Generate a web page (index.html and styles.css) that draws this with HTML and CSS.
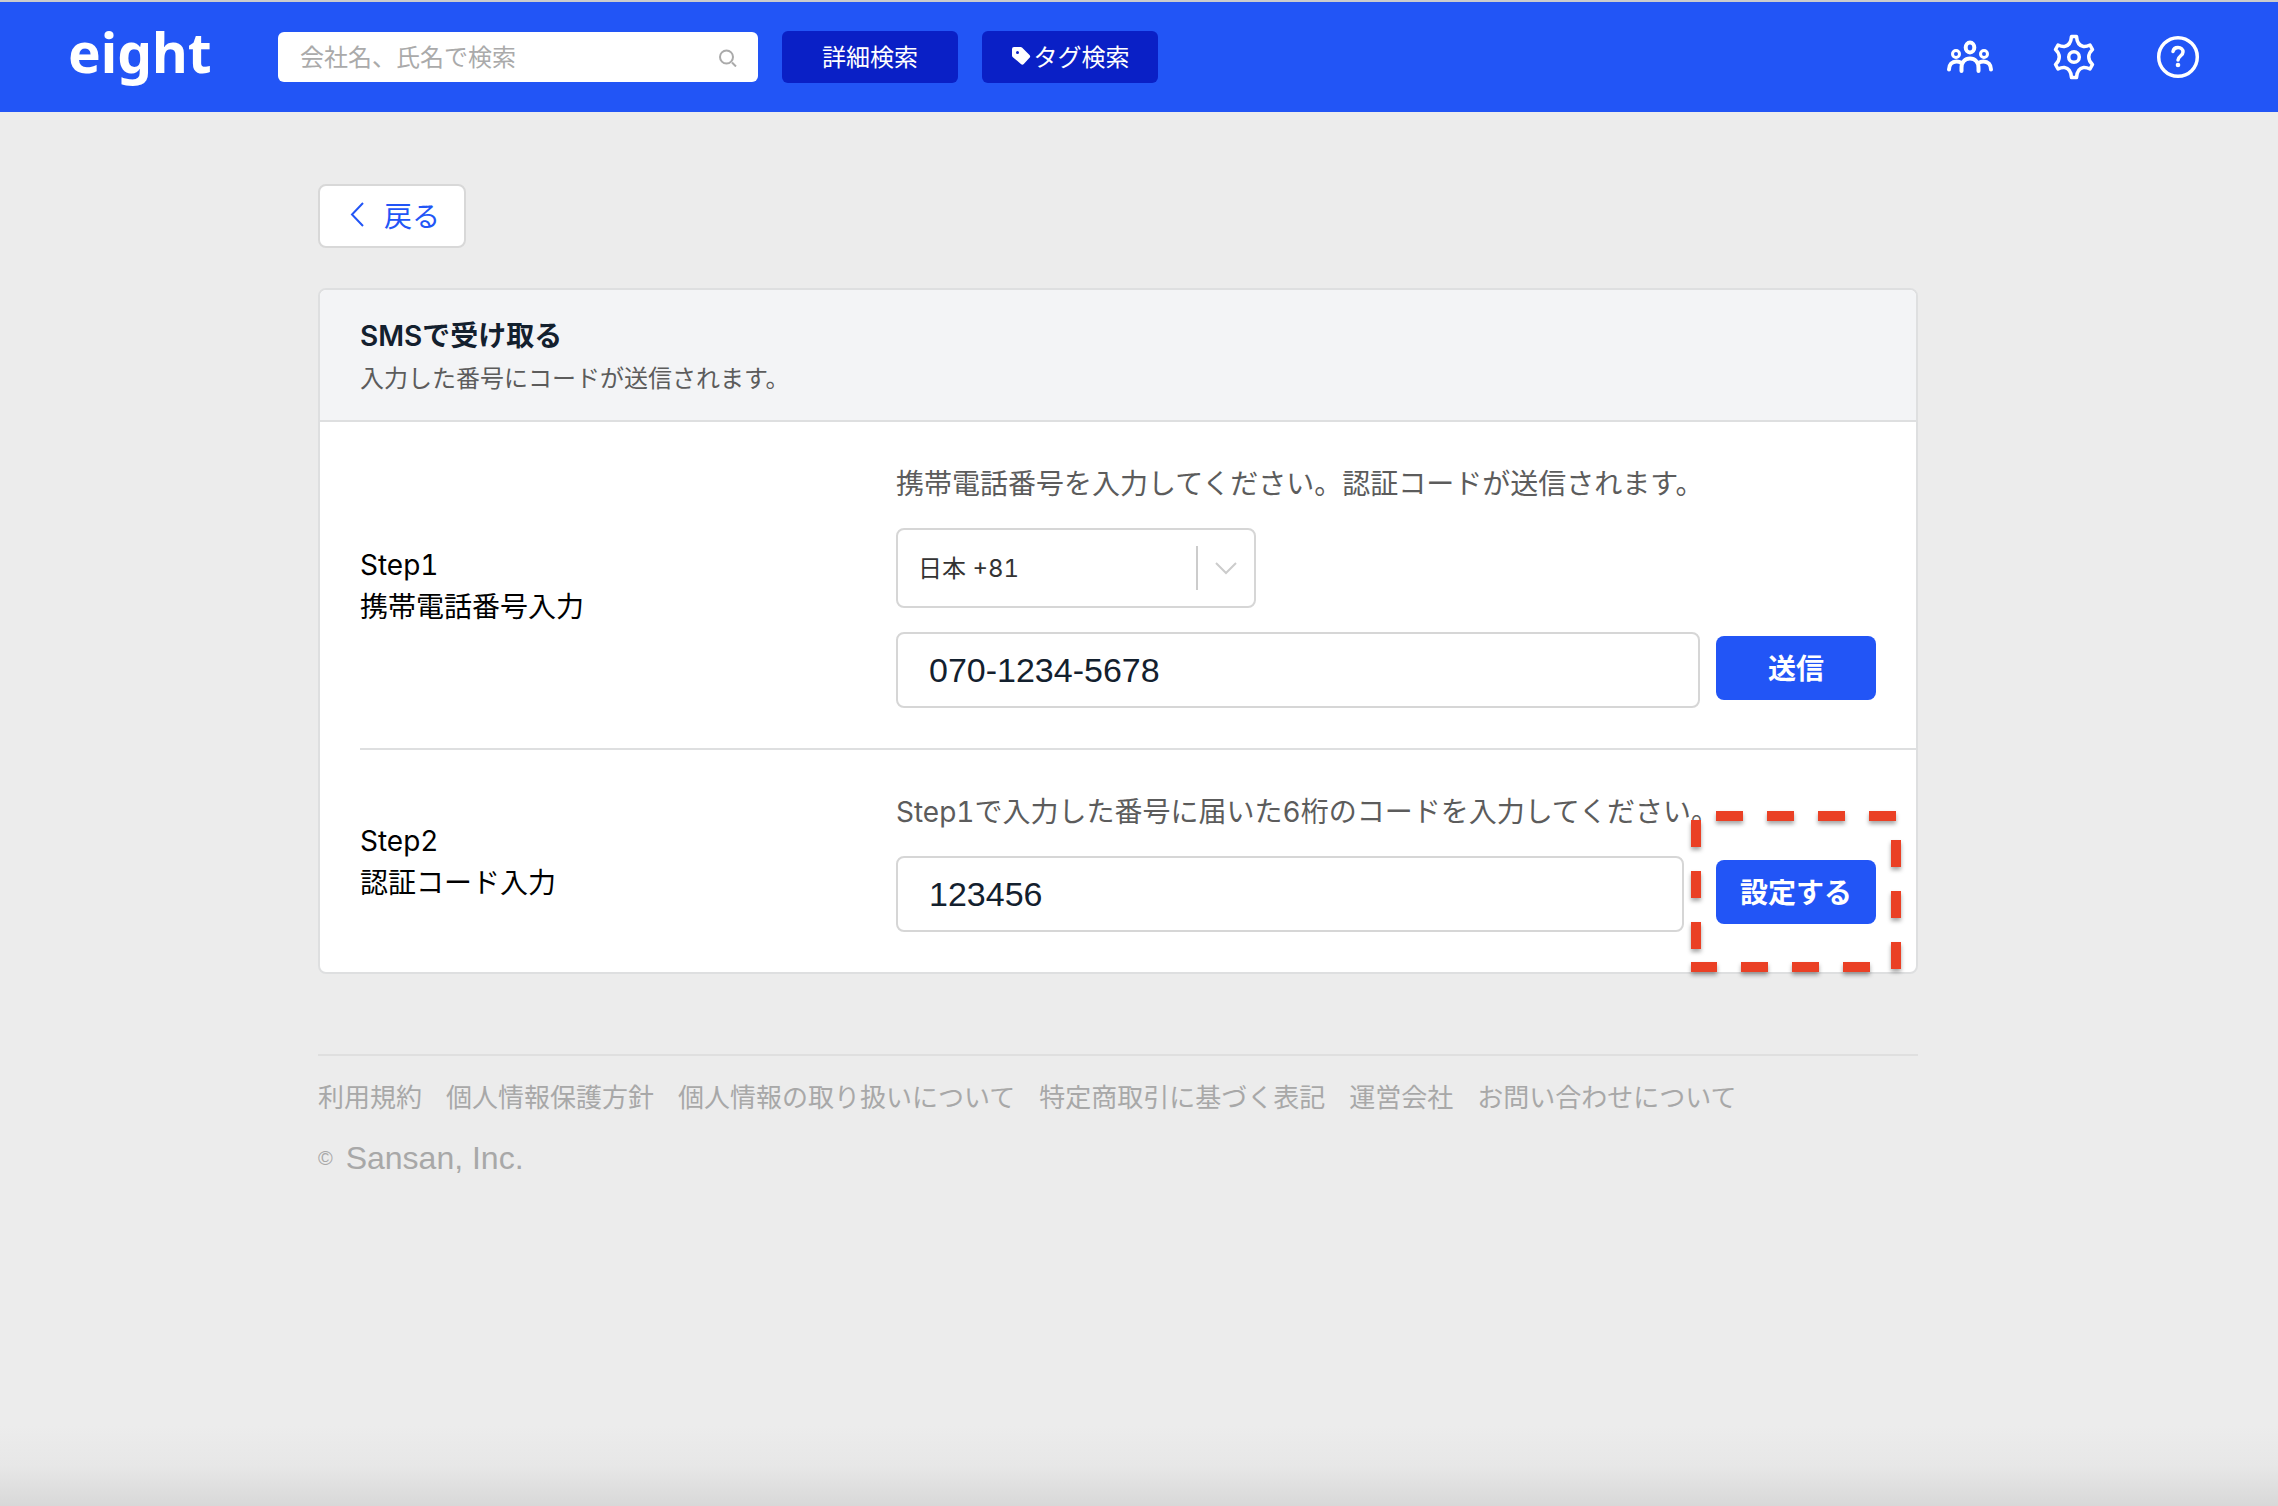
FILE: index.html
```html
<!DOCTYPE html>
<html lang="ja">
<head>
    <meta charset="UTF-8">
    <meta name="viewport" content="width=device-width, initial-scale=1.0">
    <title>SMSで受け取る - Eight</title>
    <link rel="stylesheet" href="styles.css">
</head>
<body>

    <header class="header">
        <a class="logo" href="#">eight</a>
        <form class="search" role="search">
            <input class="search-input" type="text" aria-label="検索" placeholder="会社名、氏名で検索">
            <button class="search-button" type="submit" aria-label="検索する">
                <svg width="20" height="20" viewBox="0 0 20 20" fill="none" stroke="#aaa" stroke-width="2">
                    <circle cx="8.500" cy="10" r="6.500"/>
                    <path d="M14 15.500l4 4"/>
                </svg>
            </button>
        </form>
        <button class="header-button" type="button">詳細検索</button>
        <button class="header-button" type="button">
            <svg width="20" height="20" viewBox="0 0 20 20" fill="#fff">
                <path fill-rule="evenodd" d="M1 3a2 2 0 0 1 2-2h6.500a2 2 0 0 1 1.500.600l7.500 7.400a2 2 0 0 1 0 2.800l-5.700 6.200a2 2 0 0 1-2.900 0L1.600 11a2 2 0 0 1-.600-1.400zM6.500 5a1.500 1.500 0 1 0 0 3 1.500 1.500 0 0 0 0-3z"/>
            </svg>
            タグ検索
        </button>

        <nav class="header-nav">
            <a href="#" aria-label="ネットワーク">
                <svg width="48" height="48" viewBox="0 0 48 48" fill="none" stroke="#fff" stroke-width="4" stroke-linecap="round">
                    <ellipse cx="24" cy="14.500" rx="4.300" ry="5"/>
                    <circle cx="10" cy="21" r="3.500" stroke-width="3"/>
                    <circle cx="38" cy="21" r="3.500" stroke-width="3"/>
                    <path d="M15.500 38v-3c0-6 3.500-9.500 8.500-9.500s8.500 3.500 8.500 9.500v3M3 36.500c0-5 3-8 7.500-8 2 0 3.500.500 5 1.500M45 36.500c0-5-3-8-7.500-8-2 0-3.500.500-5 1.500"/>
                </svg>
            </a>
            <a href="#" aria-label="設定">
                <svg width="48" height="48" viewBox="0 0 48 48" fill="none" stroke="#fff" stroke-width="3.500" stroke-linejoin="round">
                    <path d="M21.500 3.500h5c.500 6.500 3.500 9.500 7 10 2.500.300 4.500-.500 6.500-1.500l2.500 4.500c-5 4.500-5 10.500 0 15L40 36c-2-1-4-1.800-6.500-1.500-3.500.500-6.500 3.500-7 10h-5c-.500-6.500-3.500-9.500-7-10-2.500-.300-4.500.500-6.500 1.500l-2.500-4.500c5-4.500 5-10.500 0-15L8 12c2 1 4 1.800 6.500 1.500 3.500-.500 6.500-3.500 7-10z"/>
                    <circle cx="24" cy="24" r="5.300"/>
                </svg>
            </a>
            <a href="#" aria-label="ヘルプ">
                <svg width="48" height="48" viewBox="0 0 48 48" fill="none" stroke="#fff" stroke-width="3.500" stroke-linecap="round" stroke-linejoin="round">
                    <circle cx="24" cy="24" r="19.300"/>
                    <path d="M19 18.500c.500-2.700 2.500-4 5-4 3 0 5 2 5 4.500 0 4-5 4-5 8"/>
                    <circle cx="24" cy="32" r="2.300" fill="#fff" stroke="none"/>
                </svg>
            </a>
        </nav>
    </header>

    <main class="container">
        <a class="back" href="#">
            <svg width="16" height="26" viewBox="0 0 16 26" fill="none" stroke="#2255f6" stroke-width="2">
                <path d="M13 1L2 12.500 13 24"/>
            </svg>
            戻る
        </a>

        <section class="card">
            <div class="card-head">
                <h1>SMSで受け取る</h1>
                <p>入力した番号にコードが送信されます。</p>
            </div>

            <form class="step">
                <div class="step-name">Step1<br>携帯電話番号入力</div>
                <div class="step-body">
                    <p class="step-text">携帯電話番号を入力してください。認証コードが送信されます。</p>
                    <div class="select">
                        <select aria-label="国番号">
                            <option>日本 +81</option>
                        </select>
                        <span class="select-arrow">
                            <svg width="22" height="14" viewBox="0 0 22 14" fill="none" stroke="#ccc" stroke-width="2">
                                <path d="M1 2l10 10L21 2"/>
                            </svg>
                        </span>
                    </div>
                    <div class="field-row">
                        <input class="field" type="tel" aria-label="携帯電話番号" value="070-1234-5678">
                        <button class="primary" type="button">送信</button>
                    </div>
                </div>
            </form>

            <form class="step">
                <div class="step-name">Step2<br>認証コード入力</div>
                <div class="step-body">
                    <p class="step-text">Step1で入力した番号に届いた6桁のコードを入力してください。</p>
                    <div class="field-row field-row-code">
                        <input class="field" type="text" aria-label="認証コード" value="123456">
                        <div class="marked">
                            <button class="primary" type="button">設定する</button>
                            <svg class="mark" width="210" height="161" viewBox="0 0 210 161" fill="none" stroke="#ea4025" stroke-width="10" stroke-dasharray="27 24" stroke-dashoffset="-18">
                                <path d="M5 156V5h200v153M197 156H0"/>
                            </svg>
                        </div>
                    </div>
                </div>
            </form>
        </section>

        <footer class="footer">
            <nav class="footer-nav">
                <a href="#">利用規約</a>
                <a href="#">個人情報保護方針</a>
                <a href="#">個人情報の取り扱いについて</a>
                <a href="#">特定商取引に基づく表記</a>
                <a href="#">運営会社</a>
                <a href="#">お問い合わせについて</a>
            </nav>
            <p class="copyright"><small>©</small> Sansan, Inc.</p>
        </footer>
    </main>

</body>
</html>
```
FILE: styles.css
```css
* {
    box-sizing: border-box;
}
body {
    margin: 0;
    min-height: 100vh;
    font-family: Inter, "Noto Sans CJK JP", sans-serif;
    font-size: 28px;
    font-variant-numeric: tabular-nums;
    color: #000;
    background: #ececec linear-gradient(#ececec, #e7e7e7 50%, #d8d8d8) no-repeat bottom / 100% 80px;
}
h1, p {
    margin: 0;
}
a {
    text-decoration: none;
}
svg {
    display: block;
}
button, input, select {
    font-family: inherit;
    font-variant-numeric: inherit;
}
button {
    cursor: pointer;
}

/* header */
.header {
    display: flex;
    align-items: center;
    gap: 24px;
    height: 112px;
    padding: 0 76px 0 68px;
    border-top: 2px solid #ccc;
    background-color: #2255f6;
}
.logo {
    flex: 0 0 186px;
    padding-bottom: 10px;
    font-family: "Noto Sans", sans-serif;
    font-size: 55px;
    font-weight: 700;
    line-height: 60px;
    color: #fff;
}
.search {
    display: flex;
    flex: 0 1 480px;
    align-items: center;
    height: 50px;
    padding: 0 20px 0 22px;
    border-radius: 6px;
    background-color: #fff;
}
.search-input {
    flex: 1;
    min-width: 0;
    padding: 0;
    border: none;
    outline: none;
    font-size: 24px;
    background: none;
}
.search-input::placeholder {
    color: #aaa;
}
.search-button {
    padding: 0;
    border: none;
    background: none;
}
.header-button {
    display: flex;
    align-items: center;
    justify-content: center;
    gap: 3px;
    flex: 0 0 176px;
    height: 52px;
    padding: 0 0 3px;
    border: none;
    border-radius: 6px;
    font-size: 24px;
    color: #fff;
    background-color: #0a20c6;
}
.header-nav {
    display: flex;
    gap: 56px;
    margin-left: auto;
}

/* content */
.container {
    width: 1600px;
    max-width: calc(100% - 42px);
    margin-left: calc((100% - 1642px) / 2);
    padding: 72px 0 80px;
}
.back {
    display: flex;
    align-items: center;
    gap: 18px;
    width: 148px;
    height: 64px;
    margin-bottom: 40px;
    padding: 0 0 2px 30px;
    border: 2px solid #d8d8d8;
    border-radius: 8px;
    color: #2255f6;
    background-color: #fff;
}
.card {
    border: 2px solid #dedfe0;
    border-radius: 8px;
    background-color: #fff;
}
.card-head {
    padding: 25px 40px 23px;
    border-bottom: 2px solid #dedfe0;
    border-radius: 6px 6px 0 0;
    background-color: #f3f4f6;
}
.card-head h1 {
    margin-bottom: 4px;
    font-size: 28px;
    font-weight: 600;
    line-height: 42px;
    color: #13202e;
}
.card-head p {
    font-size: 24px;
    line-height: 36px;
    color: #5c5c5c;
}
.step {
    display: flex;
    align-items: center;
    margin-left: 40px;
    padding: 40px 40px 40px 0;
}
.step + .step {
    border-top: 2px solid #dedfe0;
}
.step-name {
    flex: 0 0 536px;
    padding-top: 2px;
    line-height: 42px;
}
.step-body {
    flex: 1;
    min-width: 0;
}
.step-text {
    margin-bottom: 22px;
    line-height: 44px;
    color: #5c5c5c;
}
.select {
    position: relative;
    width: 360px;
    margin-bottom: 24px;
}
.select select {
    display: block;
    width: 100%;
    height: 80px;
    padding: 0 60px 0 20px;
    border: 2px solid #d6d6d6;
    border-radius: 8px;
    appearance: none;
    font-size: 24px;
    color: #333;
    background-color: #fff;
}
.select-arrow {
    position: absolute;
    top: 18px;
    right: 2px;
    display: flex;
    align-items: center;
    justify-content: center;
    width: 58px;
    height: 44px;
    border-left: 2px solid #ccc;
    pointer-events: none;
}
.field-row {
    display: flex;
    align-items: flex-start;
    gap: 16px;
}
.field-row-code {
    gap: 32px;
}
.field {
    flex: 1;
    min-width: 0;
    height: 76px;
    padding: 0 31px;
    border: 2px solid #d6d6d6;
    border-radius: 8px;
    font-family: "Liberation Sans", "Noto Sans CJK JP", sans-serif;
    font-size: 34px;
    color: #13202e;
    background-color: #fff;
}
.primary {
    width: 160px;
    height: 64px;
    margin-top: 4px;
    padding: 0 0 2px;
    border: none;
    border-radius: 8px;
    font-size: 28px;
    font-weight: 600;
    color: #fff;
    background-color: #2255f6;
}
.marked {
    position: relative;
}
.mark {
    position: absolute;
    top: -45px;
    left: -25px;
    overflow: visible;
    filter: drop-shadow(0 3px 2px rgba(0, 0, 0, 0.35));
    pointer-events: none;
}

/* footer */
.footer {
    margin-top: 80px;
    padding-top: 22px;
    border-top: 2px solid #dfdfdf;
}
.footer-nav {
    display: flex;
    flex-wrap: wrap;
    gap: 0 24px;
    margin-bottom: 20px;
    font-size: 26px;
    line-height: 40px;
}
.footer-nav a {
    color: #a8a8a8;
}
.copyright {
    font-family: "Liberation Sans", sans-serif;
    font-size: 32px;
    line-height: 40px;
    color: #a8a8a8;
}
.copyright small {
    margin-right: 4px;
    font-size: 20px;
    vertical-align: 4px;
}
```
